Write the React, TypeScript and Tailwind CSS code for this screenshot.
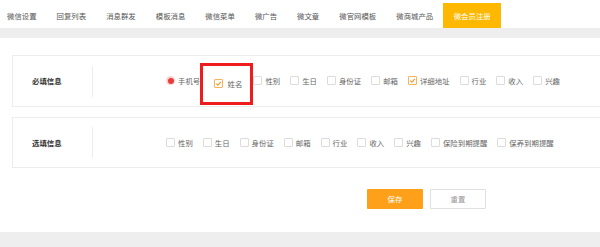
import React from 'react';

const tabs = ['微信设置', '回复列表', '消息群发', '模板消息', '微信菜单', '微广告', '微文章', '微官网模板', '微商城产品', '微会员注册'];

const requiredItems = [
    { label: '性别', checked: false },
    { label: '生日', checked: false },
    { label: '身份证', checked: false },
    { label: '邮箱', checked: false },
    { label: '详细地址', checked: true },
    { label: '行业', checked: false },
    { label: '收入', checked: false },
    { label: '兴趣', checked: false },
];

const optionalItems = ['性别', '生日', '身份证', '邮箱', '行业', '收入', '兴趣', '保险到期提醒', '保养到期提醒'];

const CheckBox: React.FC<{ checked?: boolean }> = ({ checked }) => (
    <span
        className={`w-[9px] h-[9px] shrink-0 rounded-[1px] border bg-white flex items-center justify-center ${
            checked ? 'border-[#f7b35a]' : 'border-[#dcdcdc]'
        }`}
    >
        {checked && (
            <svg viewBox="0 0 10 10" className="w-[7px] h-[7px]">
                <polyline points="1.8,5.2 4.2,7.4 8.4,2.6" fill="none" stroke="#f39a1e" strokeWidth="1.5" />
            </svg>
        )}
    </span>
);

const Option: React.FC<{ label: string; checked?: boolean }> = ({ label, checked }) => (
    <label className="flex items-center gap-[3px] mr-[10px] text-[7.4px] text-[#666] whitespace-nowrap">
        <CheckBox checked={checked} />
        <span>{label}</span>
    </label>
);

const Section: React.FC<{ title: string; height: string; children: React.ReactNode }> = ({ title, height, children }) => (
    <div className={`ml-[12px] ${height} border border-r-0 border-[#ececec] flex items-center`}>
        <div className="w-[60px] ml-[19px] text-[7.4px] font-bold text-[#333]">{title}</div>
        <div className="w-px h-[31px] bg-[#ececec]" />
        <div className="ml-[73px] flex items-center self-stretch">{children}</div>
    </div>
);

export default function App() {
    return (
        <div className="w-[600px] h-[247px] overflow-hidden bg-[#eeeeee] font-['Noto_Sans_CJK_SC',sans-serif]">
            <nav className="h-[28px] bg-white flex items-end">
                <div className="flex items-stretch h-[25px] ml-[-3px]">
                    {tabs.map((t, i) => {
                        const active = i === tabs.length - 1;
                        return (
                            <div
                                key={t}
                                className={`flex items-center whitespace-nowrap text-[7.4px] ${
                                    active ? 'bg-[#ffb800] text-white px-[10.5px]' : 'text-[#555] px-[10px]'
                                }`}
                            >
                                {t}
                            </div>
                        );
                    })}
                </div>
            </nav>

            <div className="mt-[10px] h-[194px] bg-white pt-[17px]">
                <Section title="必填信息" height="h-[52px]">
                    <div className="flex items-center">
                        <span className="w-[9px] h-[9px] rounded-full bg-[#fbd3d3] flex items-center justify-center">
                            <span className="w-[6px] h-[6px] rounded-full bg-[#ea3b3b]" />
                        </span>
                        <span className="ml-[3px] whitespace-nowrap text-[7.4px] text-[#666]">手机号码</span>
                    </div>
                    {/* highlighted field, drawn over the end of the previous label */}
                    <div className="relative z-10 ml-[-8px] self-start mt-[7px] h-[42px] border-[3px] border-[#ee1c1c] bg-white flex items-center pl-[11px] pr-[8px]">
                        <label className="flex items-center gap-[5px] text-[7.4px] text-[#666] whitespace-nowrap">
                            <CheckBox checked />
                            <span>姓名</span>
                        </label>
                    </div>
                    {requiredItems.map((it) => (
                        <Option key={it.label} label={it.label} checked={it.checked} />
                    ))}
                </Section>

                <div className="h-[10px]" />

                <Section title="选填信息" height="h-[51px]">
                    {optionalItems.map((l) => (
                        <Option key={l} label={l} />
                    ))}
                </Section>

                <div className="mt-[21px] pl-[367px] flex gap-[7px]">
                    <button className="w-[56px] h-[20px] rounded-[1px] bg-[#ffa01a] text-white text-[7.4px]">保存</button>
                    <button className="w-[56px] h-[20px] rounded-[1px] bg-white border border-[#e0e0e0] text-[#999] text-[7.4px]">重置</button>
                </div>
            </div>
        </div>
    );
}
